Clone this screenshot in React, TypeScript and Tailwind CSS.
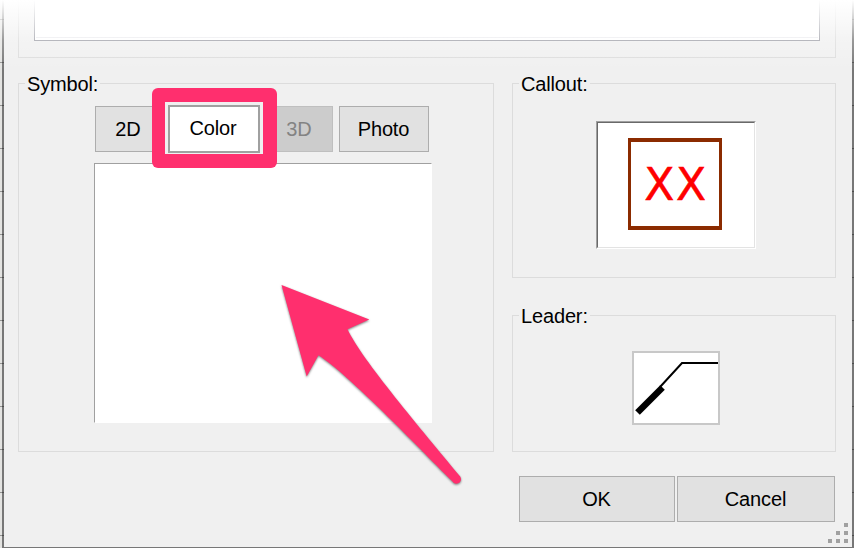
import { clsx } from "clsx";
import type { ReactNode } from "react";

function Group({ label, className, children }: { label: string; className?: string; children: ReactNode }) {
  return (
    <section className={clsx("border border-[#dcdcdc]", className)}>
      <h2 className="-mt-[12px] ml-[6px] h-[24px] w-fit bg-[#f0f0f0] px-[2px] text-[20px] leading-[24px] tracking-[-0.15px]">
        {label}
      </h2>
      {children}
    </section>
  );
}

function Button({ className, children, disabled }: { className?: string; children: ReactNode; disabled?: boolean }) {
  return (
    <button
      disabled={disabled}
      className={clsx(
        "flex h-[46px] items-center justify-center border pr-px text-[20px] leading-none tracking-[-0.15px]",
        disabled ? "border-[#bfbfbf] bg-[#cccccc] text-[#838383]" : "border-[#adadad] bg-[#e1e1e1]",
        className
      )}
    >
      {children}
    </button>
  );
}

function SymbolTabs() {
  return (
    <div className="ml-[76px] mt-[10px] flex h-[46px] w-[334px]">
      <Button className="w-[67px]">2D</Button>
      <div className="relative z-10 -ml-[10px] -mt-[18px] h-[80px] w-[125px] shrink-0 rounded-[6px] bg-[#ff2f6e] px-[13px] py-[14px]">
        <div className="h-[52px] w-[98px] bg-[#f0f0f0] pl-[3px] pt-[3px]">
          <button className="flex h-[48px] w-[92px] items-center justify-center border-2 border-[#a0a0a0] bg-white pb-[2px] pr-[2px] text-[20px] leading-none tracking-[-0.15px]">
            Color
          </button>
        </div>
      </div>
      <Button disabled className="-ml-[11px] w-[67px] shrink-0 pr-[2px]">3D</Button>
      <Button className="ml-[6px] w-[90px] shrink-0">Photo</Button>
    </div>
  );
}

function SizeGrip() {
  return (
    <svg width="20" height="20" fill="#a0a0a0" shapeRendering="crispEdges" className="absolute bottom-[4px] right-[4px]">
      <path d="M16 0h4v4h-4zM8 8h4v4H8zM16 8h4v4h-4zM0 16h4v4H0zM8 16h4v4H8zM16 16h4v4h-4z" />
    </svg>
  );
}

// Edge of the drawing grid that shows behind the dialog
function GridTicks({ className }: { className: string }) {
  return (
    <div
      className={clsx(
        "shrink-0 bg-[repeating-linear-gradient(to_bottom,transparent_0px,transparent_19px,rgba(0,0,0,0.35)_19px,rgba(0,0,0,0.35)_20px,transparent_20px,transparent_43px)]",
        className
      )}
    />
  );
}

export default function App() {
  return (
    <div className="relative flex h-[548px] w-[854px] overflow-hidden bg-[#777777] font-['Liberation_Sans',Arial,sans-serif] text-black">
      <GridTicks className="w-[2px] bg-[#e3e3e1]" />
      <GridTicks className="w-[2px] bg-[#777777]" />

      <main className="relative h-[547px] w-[848px] shrink-0 bg-[#f0f0f0] pl-[14px]">
        <div className="h-[58px] w-[818px] border border-t-0 border-[#dcdcdc] pl-[15px]">
          <div className="h-[41px] w-[786px] border border-t-0 border-[#a0a1a9] bg-white pt-[37px]">
            <div className="mx-px h-px bg-[#ececf0]" />
          </div>
        </div>

        <div className="mt-[25px] flex gap-[18px]">
          <Group label="Symbol:" className="h-[369px] w-[476px]">
            <SymbolTabs />
            <div className="ml-[75px] mt-[11px] h-[260px] w-[338px] border border-b-white border-l-[#a0a0a0] border-r-white border-t-[#a0a0a0] bg-white" />
          </Group>

          <div>
            <Group label="Callout:" className="h-[195px] w-[324px]">
              <div className="ml-[83px] mt-[25px] h-[128px] w-[160px] border border-b-white border-l-[#a0a0a0] border-r-white border-t-[#a0a0a0]">
                <div className="h-[126px] w-[158px] border border-b-[#e3e3e3] border-l-[#696969] border-r-[#e3e3e3] border-t-[#696969] bg-white pl-[30px] pt-[15px]">
                  <div className="flex h-[92px] w-[94px] items-center justify-center border-x-[3px] border-y-4 border-[#8b2b00] pl-[2px] pt-[2px]">
                    <span className="font-['DejaVu_Sans',sans-serif] text-[44px] leading-none tracking-[1.5px] text-[#ff0000] [-webkit-text-stroke:0.5px_#ff0000]">
                      XX
                    </span>
                  </div>
                </div>
              </div>
            </Group>

            <Group label="Leader:" className="mt-[37px] h-[137px] w-[324px]">
              <button className="ml-[119px] mt-[23px] block h-[74px] w-[88px] border-2 border-[#c8c8c8] bg-white">
                <svg width="84" height="70" fill="none" stroke="black">
                  <path d="M26 34L48 10H84" strokeWidth="2" />
                  <path d="M3.500 59.500L28.500 34.500" strokeWidth="6.5" />
                </svg>
              </button>
            </Group>
          </div>
        </div>

        <div className="mt-[24px] flex gap-[2px] pl-[501px]">
          <Button className="w-[156px]">OK</Button>
          <Button className="w-[158px]">Cancel</Button>
        </div>

        <SizeGrip />
      </main>

      <GridTicks className="w-[2px] bg-[#777777]" />

      <div className="pointer-events-none absolute inset-x-0 top-0 h-[70px] bg-[linear-gradient(to_bottom,#fff,rgba(255,255,255,0.75)_14px,rgba(255,255,255,0.25)_40px,transparent)]" />

      <svg
        width="854"
        height="548"
        className="pointer-events-none absolute left-0 top-0 z-20 drop-shadow-[0_1px_1px_rgba(0,0,0,0.5)]"
      >
        <path
          d="M281.5 285L369.3 319.5L347.5 329.3C362 360 422 430 460.2 476.5C463.5 482 456 486.500 452.500 481.500C415 444 350 376 318.500 355.300L306.700 376.500Z"
          fill="#ff2f6e"
        />
      </svg>
    </div>
  );
}
